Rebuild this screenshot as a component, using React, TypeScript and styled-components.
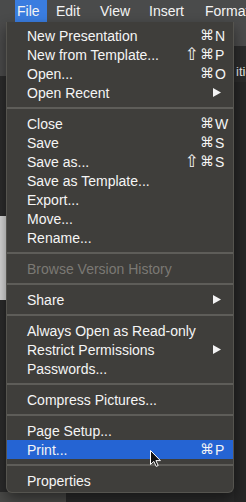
import React from "react";
import styled, { createGlobalStyle } from "styled-components";

const GlobalStyle = createGlobalStyle`
  html, body { margin: 0; padding: 0; background: #2a2a2a; }
  body { font-family: "Liberation Sans", "DejaVu Sans", Arial, sans-serif; }
`;

const Page = styled.div`
  width: 246px;
  height: 502px;
  display: flex;
  flex-direction: column;
  overflow: hidden;
  background: #2a2a2a;
`;

const MenuBar = styled.div`
  height: 22px;
  flex: none;
  display: flex;
  gap: 7px;
  padding-left: 15px;
  background: #4a4b4b;
  white-space: nowrap;
  overflow: hidden;
`;

const MenuTitle = styled.div<{ $active?: boolean; $w: number }>`
  flex: none;
  width: ${(p) => p.$w}px;
  height: 22px;
  line-height: 22px;
  padding-left: 2px;
  box-sizing: border-box;
  font-size: 14px;
  color: #f4f4f4;
  background: ${(p) => (p.$active ? "#3a7de0" : "transparent")};
`;

const Workspace = styled.div`
  flex: 1;
  position: relative;
  display: grid;
  grid-template-columns: 6px 1fr 12px;
`;

const Rail = styled.div`
  display: flex;
  flex-direction: column;
  overflow: hidden;
`;

const Strip = styled.div<{ $h: number; $bg: string }>`
  flex: none;
  height: ${(p) => p.$h}px;
  background: ${(p) => p.$bg};
`;

const Fill = styled.div<{ $bg: string }>`
  flex: 1;
  background: ${(p) => p.$bg};
`;

const Canvas = styled.div`
  display: flex;
  flex-direction: column;
  justify-content: flex-end;
  background: #2a2a2a;
`;

const Footer = styled.div`
  height: 10px;
  width: 60px;
  background: #4a4a48;
`;

const CutText = styled.div`
  flex: none;
  height: 20px;
  line-height: 20px;
  padding-left: 2px;
  font-size: 13px;
  color: #e8e8e8;
  background: #2b2b2b;
  white-space: nowrap;
`;

const Menu = styled.div`
  position: absolute;
  left: 6px;
  top: 0;
  width: 228px;
  box-sizing: border-box;
  padding: 4px 0 2px;
  background: #3f3e3b;
  border: 1px solid #55544f;
  border-top: none;
  border-radius: 0 0 6px 6px;
  box-shadow: 0 6px 14px rgba(0, 0, 0, 0.45);
`;

const Row = styled.div<{ $active?: boolean; $disabled?: boolean }>`
  display: flex;
  align-items: center;
  height: 19px;
  padding: 0 4px 0 20px;
  font-size: 14px;
  color: ${(p) => (p.$disabled ? "#7b7974" : "#f5f5f5")};
  background: ${(p) => (p.$active ? "#2564d3" : "transparent")};
  white-space: nowrap;
`;

const Label = styled.span`
  flex: 1;
`;

const Mods = styled.span`
  display: flex;
  align-items: center;
  gap: 1px;
  font-family: "DejaVu Sans", sans-serif;
  font-size: 14px;
  padding-right: 1px;
  line-height: 19px;
`;

const Shift = styled.span`
  font-size: 17px;
  line-height: 19px;
`;

const Key = styled.span`
  width: 14px;
  flex: none;
`;

const Arrow = styled.svg`
  width: 8px;
  height: 9px;
  margin-right: 8px;
  flex: none;
`;

const Separator = styled.div`
  height: 12px;
  display: flex;
  align-items: center;
  &::after {
    content: "";
    flex: 1;
    height: 2px;
    background: #5e5d59;
  }
`;

const Cursor = styled.svg`
  position: absolute;
  left: 150px;
  top: 428px;
  width: 11px;
  height: 17px;
`;

type Item =
  | { sep: true }
  | {
      sep?: false;
      label: string;
      shift?: boolean;
      keyChar?: string;
      submenu?: boolean;
      disabled?: boolean;
      active?: boolean;
    };

const items: Item[] = [
  { label: "New Presentation", keyChar: "N" },
  { label: "New from Template...", shift: true, keyChar: "P" },
  { label: "Open...", keyChar: "O" },
  { label: "Open Recent", submenu: true },
  { sep: true },
  { label: "Close", keyChar: "W" },
  { label: "Save", keyChar: "S" },
  { label: "Save as...", shift: true, keyChar: "S" },
  { label: "Save as Template..." },
  { label: "Export..." },
  { label: "Move..." },
  { label: "Rename..." },
  { sep: true },
  { label: "Browse Version History", disabled: true },
  { sep: true },
  { label: "Share", submenu: true },
  { sep: true },
  { label: "Always Open as Read-only" },
  { label: "Restrict Permissions", submenu: true },
  { label: "Passwords..." },
  { sep: true },
  { label: "Compress Pictures..." },
  { sep: true },
  { label: "Page Setup..." },
  { label: "Print...", keyChar: "P", active: true },
  { sep: true },
  { label: "Properties" },
];

const titles = [
  { t: "File", w: 32, active: true },
  { t: "Edit", w: 37 },
  { t: "View", w: 42 },
  { t: "Insert", w: 49 },
  { t: "Format", w: 60 },
];

export default function App() {
  return (
    <>
      <GlobalStyle />
      <Page>
        <MenuBar>
          {titles.map((m) => (
            <MenuTitle key={m.t} $w={m.w} $active={m.active}>
              {m.t}
            </MenuTitle>
          ))}
        </MenuBar>
        <Workspace>
          <Rail>
            <Strip $h={54} $bg="#4b4b4b" />
            <Strip $h={140} $bg="#2c2c2c" />
            <Strip $h={84} $bg="#d9d9d9" />
            <Fill $bg="#2b2b2b" />
            <Strip $h={10} $bg="#4a4a48" />
          </Rail>
          <Canvas>
            <Footer />
          </Canvas>
          <Rail>
            <Strip $h={24} $bg="#4b4b4b" />
            <Strip $h={16} $bg="#2b2b2b" />
            <CutText>ition</CutText>
            <Fill $bg="#262626" />
          </Rail>
          <Menu>
            {items.map((it, i) =>
              it.sep ? (
                <Separator key={i} />
              ) : (
                <Row key={i} $active={it.active} $disabled={it.disabled}>
                  <Label>{it.label}</Label>
                  {it.keyChar && (
                    <Mods>
                      {it.shift && <Shift>⇧</Shift>}
                      <span>⌘</span>
                    </Mods>
                  )}
                  {it.keyChar && <Key>{it.keyChar}</Key>}
                  {it.submenu && (
                    <Arrow viewBox="0 0 8 9">
                      <path d="M0 0 L8 4.5 L0 9 Z" fill="#f3f3f3" />
                    </Arrow>
                  )}
                </Row>
              )
            )}
          </Menu>
          <Cursor viewBox="0 0 11 17">
            <path
              d="M0.5 0.5 L0.5 14.5 L3.8 11.4 L6.2 16.4 L8.2 15.5 L5.9 10.6 L10.4 10.6 Z"
              fill="#111"
              stroke="#fff"
              strokeWidth="1"
              strokeLinejoin="round"
            />
          </Cursor>
        </Workspace>
      </Page>
    </>
  );
}
